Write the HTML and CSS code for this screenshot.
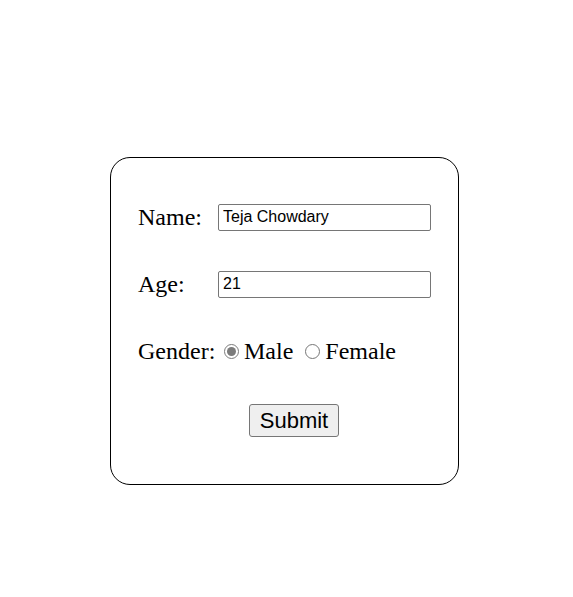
FILE: index.html
```html
<!DOCTYPE html>
<html>
<head>
    <meta charset="UTF-8">
    <title>Form</title>
    <link rel="stylesheet" href="styles.css">
</head>
<body>
    <form class="card">
        <div class="row">
            <label class="field-label">Name:</label>
            <input type="text" class="field-input" value="Teja Chowdary">
        </div>
        <div class="row">
            <label class="field-label">Age:</label>
            <input type="text" class="field-input" value="21">
        </div>
        <div class="row">
            <label class="field-label">Gender:</label>
            <input type="radio" name="gender" class="radio" checked>
            <span class="radio-text">Male</span>
            <input type="radio" name="gender" class="radio">
            <span class="radio-text">Female</span>
        </div>
        <div class="button-row">
            <button type="button" class="submit">Submit</button>
        </div>
    </form>
</body>
</html>
```

FILE: styles.css
```css
body {
    margin: 8px;
    background-color: #FFFFFF;
    font-family: "Liberation Serif", serif;
}
.card {
    width: 349px;
    margin: 149px 0 0 102px;
    padding: 46px 8px 47px 27px;
    box-sizing: border-box;
    border: 1px solid #000000;
    border-radius: 20px;
}
.row {
    display: flex;
    align-items: center;
    height: 27px;
    margin-bottom: 40px;
}
.field-label {
    width: 80px;
    font-size: 24px;
    color: #000000;
    flex-shrink: 0;
}
.field-input {
    width: 213px;
    height: 27px;
    box-sizing: border-box;
    margin: 0;
    padding: 0 4px 2px 4px;
    border: 1px solid #767676;
    border-radius: 2px;
    font-family: "Liberation Sans", Arial, sans-serif;
    font-size: 16px;
    color: #000000;
}
.radio {
    width: 15px;
    height: 15px;
    margin: 0 5px 0 6px;
    accent-color: #7B7B7B;
}
.radio-text {
    font-size: 24px;
    margin-right: 6px;
}
.button-row {
    display: flex;
    justify-content: center;
    margin-top: -1px;
}
.submit {
    width: 90px;
    height: 33px;
    padding: 3px 0;
    font-family: "Liberation Sans", Arial, sans-serif;
    font-size: 22px;
    background-color: #EFEFEF;
    border: 1px solid #767676;
    border-radius: 3px;
    color: #000000;
}
```
